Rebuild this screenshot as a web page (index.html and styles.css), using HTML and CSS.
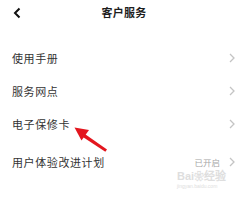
FILE: index.html
```html
<!DOCTYPE html>
<html lang="zh-CN">
<head>
<meta charset="utf-8">
<link rel="stylesheet" href="styles.css">
</head>
<body>
<div class="page">
  <header class="bar">
    <span class="back">
      <svg width="8" height="12" viewBox="0 0 8 12"><path d="M6.5 1.5 L2 6 L6.5 10.5" fill="none" stroke="#111" stroke-width="2"/></svg>
    </span>
    <h1 class="title">客户服务</h1>
    <span></span>
  </header>
  <ul class="list">
    <li class="row"><span class="label">使用手册</span><span class="chev"><svg width="6" height="10" viewBox="0 0 6 10"><path d="M1 1 L5 5 L1 9" fill="none" stroke="#c4c4c4" stroke-width="1.3"/></svg></span></li>
    <li class="row"><span class="label">服务网点</span><span class="chev"><svg width="6" height="10" viewBox="0 0 6 10"><path d="M1 1 L5 5 L1 9" fill="none" stroke="#c4c4c4" stroke-width="1.3"/></svg></span></li>
    <li class="row"><span class="label">电子保修卡</span><span class="chev"><svg width="6" height="10" viewBox="0 0 6 10"><path d="M1 1 L5 5 L1 9" fill="none" stroke="#c4c4c4" stroke-width="1.3"/></svg></span></li>
    <li class="row row-last"><span class="label">用户体验改进计划</span><span class="value">已开启</span><span class="chev"><svg width="6" height="10" viewBox="0 0 6 10"><path d="M1 1 L5 5 L1 9" fill="none" stroke="#c4c4c4" stroke-width="1.3"/></svg></span></li>
  </ul>
  <svg class="arrow" width="40" height="30" viewBox="0 0 40 30">
    <path d="M35 24.5 L12.5 8.8 L10.5 11.8 L33.3 26.8 Z" fill="#e3161e"/>
    <path d="M2.5 2.5 L17 5 L9.5 15.5 Z" fill="#e3161e"/>
  </svg>
  <div class="mark">
    <div class="mark-top">Bai<span class="paw">❀</span>经验</div>
    <div class="mark-sub">jingyan.baidu.com</div>
  </div>
</div>
</body>
</html>
```

FILE: styles.css
```css
* { box-sizing: border-box; }
html, body {
  margin: 0;
  padding: 0;
  background: #fff;
}
body {
  font-family: "Noto Sans CJK SC", "Noto Sans", sans-serif;
  color: #333;
}
.page {
  position: relative;
  width: 248px;
  height: 203px;
  overflow: hidden;
}
.bar {
  display: grid;
  grid-template-columns: 1fr auto 1fr;
  align-items: center;
  height: 25px;
}
.back {
  display: flex;
  align-items: center;
  padding-left: 13px;
  padding-top: 1px;
}
.title {
  margin: 0;
  font-size: 11px;
  font-weight: 700;
  color: #1e1e1e;
  line-height: 25px;
  letter-spacing: 0.2px;
}
.list {
  list-style: none;
  margin: 16px 0 0;
  padding: 0;
}
.row {
  display: flex;
  align-items: center;
  height: 33px;
  padding: 0 13px 0 12px;
}
.row-last {
  margin-top: 5px;
}
.label {
  flex: 1;
  font-size: 11px;
  color: #333;
  letter-spacing: 0.6px;
}
.value {
  font-size: 8.5px;
  color: #a6a6a6;
  margin-right: 9px;
}
.chev {
  display: flex;
  align-items: center;
}
.arrow {
  position: absolute;
  left: 72px;
  top: 125px;
}
.mark {
  position: absolute;
  left: 177px;
  top: 170px;
  color: #dedede;
  font-family: "Liberation Sans", sans-serif;
}
.mark-top {
  font-size: 11px;
  font-weight: 700;
  line-height: 13px;
}
.paw {
  font-size: 10px;
}
.mark-sub {
  font-size: 5px;
  line-height: 7px;
}
```
